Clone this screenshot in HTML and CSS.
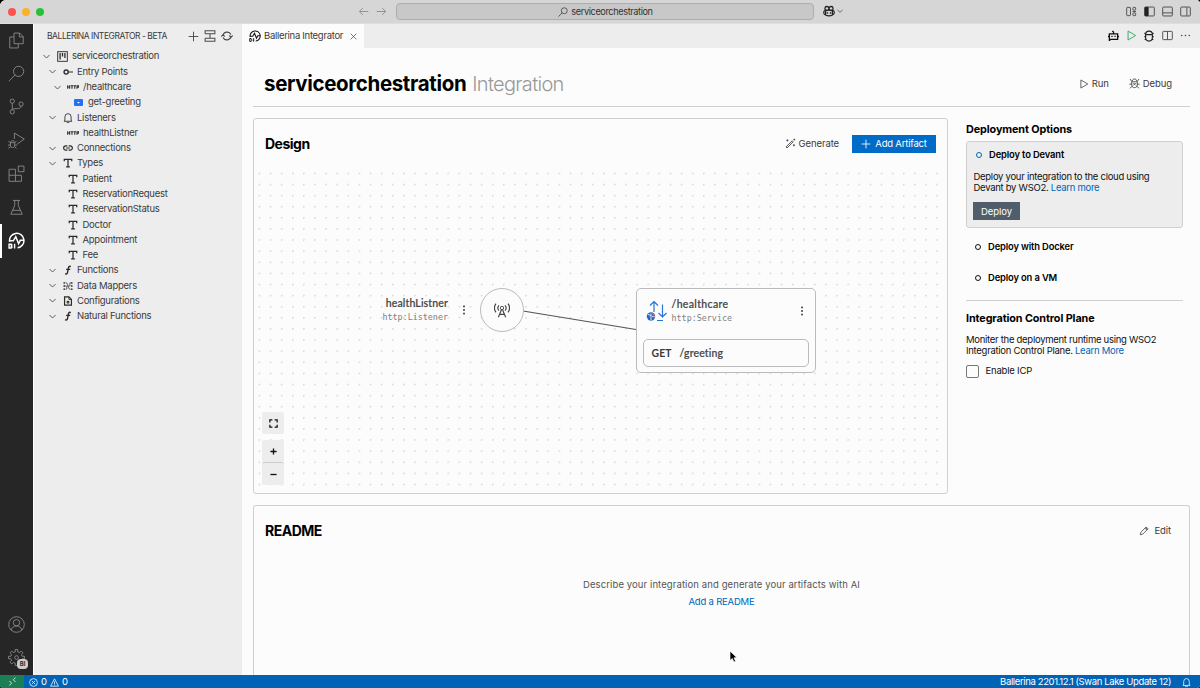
FILE: index.html
```
<!DOCTYPE html>
<html lang="en">
<head>
<meta charset="utf-8">
<title>serviceorchestration</title>
<link rel="stylesheet" href="styles.css">
</head>
<body>
<svg class="sprite" aria-hidden="true">
  <symbol id="chev" viewBox="0 0 16 16"><path d="M1 4.500l7 7 7-7"/></symbol>
  <symbol id="plus" viewBox="0 0 16 16"><path d="M8 1v14M1 8h14"/></symbol>
  <symbol id="left" viewBox="0 0 16 16"><path d="M15 8H2M7 3L2 8l5 5"/></symbol>
  <symbol id="right" viewBox="0 0 16 16"><path d="M1 8h13M9 3l5 5-5 5"/></symbol>
  <symbol id="search" viewBox="0 0 16 16"><circle cx="10" cy="6" r="4.800"/><path d="M6.500 9.500L.8 15.300"/></symbol>
  <symbol id="copilot" viewBox="0 0 16 16"><path d="M3 7C2 4 3 2 5 2s3 1 3 2.500C8 3 9 2 11 2s3 2 2 5M3 7h4l1-2.500L9 7h4M3 7c-1.500.5-2 1.500-2 3 0 3 4 4.500 7 4.500s7-1.500 7-4.500c0-1.500-.5-2.500-2-3M6 9.500v2M10 9.500v2M3.500 7.500v5M12.500 7.500v5" stroke-width="1.700"/></symbol>
  <symbol id="layout" viewBox="0 0 16 16"><rect x="1" y="2" width="5.500" height="12" rx="1"/><rect x="10" y="2" width="4" height="4" rx="1"/><rect x="10" y="10" width="4" height="4" rx="1"/><path d="M9.500 8h5"/></symbol>
  <symbol id="paneleft" viewBox="0 0 16 16"><rect x="1" y="1.500" width="14" height="13" rx="1.200"/><path d="M1.500 2h4.500v12H1.500z" fill="#222" stroke="#222"/></symbol>
  <symbol id="panebottom" viewBox="0 0 16 16"><rect x="1" y="1.500" width="14" height="13" rx="1.200"/><path d="M1 10h14"/></symbol>
  <symbol id="paneright" viewBox="0 0 16 16"><rect x="1" y="1.500" width="14" height="13" rx="1.200"/><path d="M10 2v12"/></symbol>
  <symbol id="split" viewBox="0 0 16 16"><rect x="1" y="2" width="14" height="12" rx="1"/><path d="M8 2v12"/></symbol>
  <symbol id="bot" viewBox="0 0 16 16"><path d="M2 15.300V5.500h12v8H4zM8 5.500V2M6 2h2M.8 8.500v2M15.200 8.500v2M5.800 8.500V10M10.200 8.500V10" stroke-width="1.900"/></symbol>
  <symbol id="play" viewBox="0 0 16 16"><path d="M3 1.500v13L14 8z"/></symbol>
  <symbol id="bug" viewBox="0 0 16 16"><path d="M3.500 6.200h9v3.600c0 3.200-1.800 5-4.500 5s-4.500-1.800-4.500-5zM3.500 6C3.500 3 5 1.500 8 1.500S12.500 3 12.500 6M2 4l1.500 1.500M14 4l-1.500 1.500M1.500 9h2M14.500 9h-2M2.300 13l1.500-1M13.700 13l-1.500-1" stroke-width="1.500"/></symbol>
  <symbol id="debug" viewBox="0 0 16 16"><path d="M5 4.500C5 2.500 6 1.500 8 1.500s3 1 3 3M3.500 5.500h9M4 5.500v4.500c0 2.500 1.500 4 4 4s4-1.500 4-4V5.500M1.500 1.500L4 5M14.500 1.500L12 5M.5 9H4M15.500 9H12M1.500 15L4.500 12M14.500 15l-3-3M6.300 7.300l3.400 3.400M9.700 7.300l-3.400 3.400"/></symbol>
  <symbol id="dots" viewBox="0 0 16 16"><g fill="currentColor" stroke="none"><circle cx="2.500" cy="8" r="1.200"/><circle cx="8" cy="8" r="1.200"/><circle cx="13.500" cy="8" r="1.200"/></g></symbol>
  <symbol id="kebab" viewBox="0 0 16 16"><g fill="currentColor" stroke="none"><rect x="6.700" y="1" width="2.600" height="2.600"/><rect x="6.700" y="6.700" width="2.600" height="2.600"/><rect x="6.700" y="12.400" width="2.600" height="2.600"/></g></symbol>
  <symbol id="close" viewBox="0 0 16 16"><path d="M1.500 1.500l13 13M14.500 1.500l-13 13" stroke-width="1.700"/></symbol>
  <symbol id="files" viewBox="0 0 24 24"><path d="M8.500 1.500h8l5 5v10h-13zM16 1.500V7h5.500M8.500 7H2.500v15.500h12V17"/></symbol>
  <symbol id="branch" viewBox="0 0 24 24"><circle cx="6" cy="4.500" r="3"/><circle cx="6" cy="19.500" r="3"/><circle cx="18.500" cy="8.500" r="3"/><path d="M6 7.500v9M18.500 11.500c0 3-3 3.500-6 3.500-4 0-6.500.5-6.500 2"/></symbol>
  <symbol id="rundebug" viewBox="0 0 24 24"><path d="M9 10V1.500L23 10l-10 7M3.500 15h6v3.500c0 2-1.300 3.500-3 3.500s-3-1.500-3-3.500zM4 15c0-2 1-3 2.500-3S9 13 9 15M.5 13l3 2M12 13l-2.500 2M0 18.500h3.500M13 18.500H9.500M.5 23l3.300-2.300M12 23l-3-2.300"/></symbol>
  <symbol id="ext" viewBox="0 0 24 24"><path d="M1.500 6h9v8.500h8.500v8.500H1.500zM1.500 14.500h9V23M14.500 1.500h8v8h-8z" stroke-linejoin="round"/></symbol>
  <symbol id="flask" viewBox="0 0 24 24"><path d="M7 2h10M9.500 2v7L4 21.500h16L14.500 9V2M6.500 16h11"/></symbol>
  <symbol id="bi" viewBox="0 0 24 24"><path d="M2.300 14A10.200 10.200 0 1 1 13.500 22.200M3 12.500h4.500l3.500-6 4 10 2.500-5H22" stroke-width="2.100"/><path d="M1.500 17.200h3q2 1.200 0 2.600q2.400 1.300 0 2.900H1.500zM9.300 16.500v6.700" stroke-width="2"/></symbol>
  <symbol id="account" viewBox="0 0 24 24"><circle cx="12" cy="12" r="11"/><circle cx="12" cy="9.500" r="4.500"/><path d="M4.500 20c1-4 4-6 7.500-6s6.500 2 7.500 6"/></symbol>
  <symbol id="gear" viewBox="0 0 24 24"><path d="M10.200 4V.8h3.600V4l2.600 1.100 2.300-2.300 2.500 2.500L18.900 7.600 20 10.200h3.200v3.600H20l-1.100 2.600 2.300 2.300-2.500 2.500-2.300-2.300L13.800 20v3.200h-3.600V20l-2.600-1.100-2.300 2.300-2.500-2.500 2.300-2.300L4 13.800H.8v-3.600H4l1.100-2.600-2.300-2.300 2.500-2.500 2.300 2.300z"/><circle cx="12" cy="12" r="2.600"/></symbol>
  <symbol id="collapse" viewBox="0 0 16 16"><path d="M1.500 5V1h13v4h-13M1.500 11v4h13v-4h-13M8 5v6" stroke-width="1.400"/></symbol>
  <symbol id="refresh" viewBox="0 0 16 16"><path d="M2.500 8A5.700 5.700 0 0 1 13.300 6M13.500 8A5.700 5.700 0 0 1 2.700 10M.3 8.700L2.500 6.300 5 8.700M11 7.300l2.500 2.400 2.200-2.400" stroke-width="1.500"/></symbol>
  <symbol id="project" viewBox="0 0 16 16"><rect x="1" y="1" width="14" height="14"/><path d="M4.500 3v9.500M8 3v5M11.500 3v7" stroke-width="1.900"/></symbol>
  <symbol id="entry" viewBox="0 0 16 16"><circle cx="5" cy="8" r="3.300" stroke-width="2.200"/><path d="M8.500 8H16" stroke-width="1.900"/></symbol>
  <symbol id="http" viewBox="0 0 18 16"><path d="M1 5.500v5M4 5.500v5M1 8h3M5.500 6h4M7.500 6v4.500M10 6h3.500M11.700 6v4.500M15 10.500V6h2.500v2.500H15" stroke-width="1.600"/></symbol>
  <symbol id="bell" viewBox="0 0 16 16"><path d="M3 12V6.500a5 5.500 0 0 1 10 0V12l1.500 1.200h-13zM6 14a2 1.800 0 0 0 4 0"/></symbol>
  <symbol id="link" viewBox="0 0 16 16"><path d="M7 4.500H4.500a3.500 3.500 0 0 0 0 7H7M9 4.500h2.500a3.500 3.500 0 0 1 0 7H9M5 8h6" stroke-width="1.900"/></symbol>
  <symbol id="type" viewBox="0 0 16 16"><path d="M2 5V2h12v3M8 2v12.500M5 14.300h6" stroke-width="2"/></symbol>
  <symbol id="fn" viewBox="0 0 16 16"><path d="M12.500 2.500c-3-1.500-3.700 1-4.200 4L7.200 12c-.5 2.500-2 3-4 2M5 7h6.500" stroke-width="2.200"/></symbol>
  <symbol id="mapper" viewBox="0 0 16 16"><path d="M4 3h2l4 10h2M4 13h2V8h5V3h2M2 8h3" stroke-width="1.300"/><g fill="currentColor" stroke="none"><circle cx="2" cy="3" r="1.500"/><circle cx="2" cy="8" r="1.500"/><circle cx="2" cy="13" r="1.500"/><circle cx="14" cy="3" r="1.500"/><circle cx="14" cy="8" r="1.500"/><circle cx="14" cy="13" r="1.500"/></g></symbol>
  <symbol id="config" viewBox="0 0 16 16"><path d="M2.500 1.500h7l4 4v9h-11z" stroke-width="1.900"/><path d="M9.500 1.500v4h4" stroke-width="1.400"/><circle cx="8" cy="10" r="1.500" stroke-width="1.700"/></symbol>
  <symbol id="wand" viewBox="0 0 16 16"><path d="M1.500 13L10.500 4l1.500 1.500-9 9zM3.500 2v3M2 3.500h3M13 9v3M11.500 10.500h3M13.500 1v2.500M12.300 2.200h2.500"/></symbol>
  <symbol id="pencil" viewBox="0 0 16 16"><path d="M2 14l1-4 8.500-8.500 3 3L6 13zM9.500 3.500l3 3M10.500 2.500l3 3"/></symbol>
  <symbol id="fit" viewBox="0 0 16 16"><path d="M1.500 6V1.500H6M10 1.500h4.500V6M14.500 10v4.500H10M6 14.500H1.500V10" stroke-width="2.200"/></symbol>
  <symbol id="antenna" viewBox="0 0 24 24"><circle cx="12" cy="9" r="2.500"/><path d="M11.200 11.500L6.500 23M12.800 11.500L17.500 23M8.500 18.500h7M7.500 5a6 6 0 0 0 0 8M16.500 5a6 6 0 0 1 0 8M3 2.500a11 11 0 0 0 0 13M21 2.500a11 11 0 0 1 0 13" stroke-width="1.700"/></symbol>
  <symbol id="remote" viewBox="0 0 16 16"><path d="M2.500 7l4 4-4 4M13.500 1l-4 4 4 4"/></symbol>
  <symbol id="error" viewBox="0 0 16 16"><circle cx="8" cy="8" r="6.900"/><path d="M5 5l6 6M11 5l-6 6"/></symbol>
  <symbol id="warn" viewBox="0 0 16 16"><path d="M8 1.500L1 14.500h14zM8 6v4.500M8 11.500V13"/></symbol>
</svg>

<div class="window">
  <header class="titlebar">
    <div class="lights"><i class="red"></i><i class="amber"></i><i class="green"></i></div>
    <div class="nav"><svg class="ic s11"><use href="#left"/></svg><svg class="ic s11"><use href="#right"/></svg></div>
    <div class="command"><svg class="ic s10"><use href="#search"/></svg><span>serviceorchestration</span></div>
    <div class="copilot"><svg class="ic s12"><use href="#copilot"/></svg><svg class="ic s6"><use href="#chev"/></svg></div>
    <div class="actions"><svg class="ic s11"><use href="#layout"/></svg><svg class="ic s11"><use href="#paneleft"/></svg><svg class="ic s11"><use href="#panebottom"/></svg><svg class="ic s11"><use href="#paneright"/></svg></div>
  </header>

  <div class="body">
    <nav class="activity">
      <div class="act"><svg class="ic s17"><use href="#files"/></svg></div>
      <div class="act"><svg class="ic s17 thin"><use href="#search"/></svg></div>
      <div class="act"><svg class="ic s17"><use href="#branch"/></svg></div>
      <div class="act"><svg class="ic s17"><use href="#rundebug"/></svg></div>
      <div class="act"><svg class="ic s17"><use href="#ext"/></svg></div>
      <div class="act"><svg class="ic s17"><use href="#flask"/></svg></div>
      <div class="act current"><svg class="ic s17"><use href="#bi"/></svg></div>
      <div class="act last"><svg class="ic s17"><use href="#account"/></svg></div>
      <div class="act"><svg class="ic s17"><use href="#gear"/></svg><b class="badge">BI</b></div>
    </nav>

    <aside class="sidebar">
      <div class="side-head"><span>BALLERINA INTEGRATOR - BETA</span><svg class="ic s11"><use href="#plus"/></svg><svg class="ic s12"><use href="#collapse"/></svg><svg class="ic s12"><use href="#refresh"/></svg></div>
      <div class="tree">
        <div class="row l0"><svg class="ic s7"><use href="#chev"/></svg><svg class="ic s11 dark"><use href="#project"/></svg><span>serviceorchestration</span></div>
        <div class="row l1"><svg class="ic s7"><use href="#chev"/></svg><svg class="ic s10 dark"><use href="#entry"/></svg><span>Entry Points</span></div>
        <div class="row l2"><svg class="ic s7"><use href="#chev"/></svg><svg class="ic s12 dark"><use href="#http"/></svg><span>/healthcare</span></div>
        <div class="row l3"><svg class="resource" viewBox="0 0 9 7"><rect width="9" height="7" rx="1" fill="#2470f5"/><path d="M3 3h3L4.500 4.500z" fill="#fff"/></svg><span>get-greeting</span></div>
        <div class="row l1"><svg class="ic s7"><use href="#chev"/></svg><svg class="ic s10 dark"><use href="#bell"/></svg><span>Listeners</span></div>
        <div class="row l2 leaf"><svg class="ic s12 dark"><use href="#http"/></svg><span>healthListner</span></div>
        <div class="row l1"><svg class="ic s7"><use href="#chev"/></svg><svg class="ic s10 dark"><use href="#link"/></svg><span>Connections</span></div>
        <div class="row l1"><svg class="ic s7"><use href="#chev"/></svg><svg class="ic s10 dark"><use href="#type"/></svg><span>Types</span></div>
        <div class="row l2 leaf"><svg class="ic s10 dark"><use href="#type"/></svg><span>Patient</span></div>
        <div class="row l2 leaf"><svg class="ic s10 dark"><use href="#type"/></svg><span>ReservationRequest</span></div>
        <div class="row l2 leaf"><svg class="ic s10 dark"><use href="#type"/></svg><span>ReservationStatus</span></div>
        <div class="row l2 leaf"><svg class="ic s10 dark"><use href="#type"/></svg><span>Doctor</span></div>
        <div class="row l2 leaf"><svg class="ic s10 dark"><use href="#type"/></svg><span>Appointment</span></div>
        <div class="row l2 leaf"><svg class="ic s10 dark"><use href="#type"/></svg><span>Fee</span></div>
        <div class="row l1"><svg class="ic s7"><use href="#chev"/></svg><svg class="ic s10 dark"><use href="#fn"/></svg><span>Functions</span></div>
        <div class="row l1"><svg class="ic s7"><use href="#chev"/></svg><svg class="ic s10"><use href="#mapper"/></svg><span>Data Mappers</span></div>
        <div class="row l1"><svg class="ic s7"><use href="#chev"/></svg><svg class="ic s10 dark"><use href="#config"/></svg><span>Configurations</span></div>
        <div class="row l1"><svg class="ic s7"><use href="#chev"/></svg><svg class="ic s10 dark"><use href="#fn"/></svg><span>Natural Functions</span></div>
      </div>
    </aside>

    <main class="editor">
      <div class="tabs">
        <div class="tab"><svg class="ic s12 black"><use href="#bi"/></svg><span>Ballerina Integrator</span><svg class="ic s7 shut"><use href="#close"/></svg></div>
        <div class="actions"><svg class="ic s11 black"><use href="#bot"/></svg><svg class="ic s11 run"><use href="#play"/></svg><svg class="ic s12 bug"><use href="#bug"/></svg><svg class="ic s11"><use href="#split"/></svg><svg class="ic s11"><use href="#dots"/></svg></div>
      </div>

      <div class="page">
        <div class="page-head">
          <h1>serviceorchestration</h1><span class="kind">Integration</span>
          <div class="head-btns">
            <span class="btn"><svg class="ic s10"><use href="#play"/></svg><span>Run</span></span>
            <span class="btn"><svg class="ic s11"><use href="#debug"/></svg><span>Debug</span></span>
          </div>
        </div>

        <div class="columns">
          <section class="card design">
            <div class="card-head">
              <h2>Design</h2>
              <span class="btn generate"><svg class="ic s11"><use href="#wand"/></svg><span>Generate</span></span>
              <span class="primary"><svg class="ic s10"><use href="#plus"/></svg><span>Add Artifact</span></span>
            </div>
            <div class="canvas">
              <svg class="wire" viewBox="0 0 693 325"><path d="M269 143L382 161.500"/></svg>
              <div class="listener">
                <div class="names"><span class="name">healthListner</span><span class="mono">http:Listener</span></div>
                <svg class="ic s10 dark"><use href="#kebab"/></svg>
                <div class="circle"><svg class="ic s16"><use href="#antenna"/></svg></div>
              </div>
              <div class="service">
                <div class="service-head">
                  <svg class="svc-icon" viewBox="0 0 22 22"><path d="M8 12V1.500M4 5.500l4-4 4 4M16.500 4.500V17M12.500 13l4 4 4-4M11 20.500h6" fill="none" stroke="#2673d9" stroke-width="1.200"/><circle cx="5" cy="16.500" r="4.200" fill="#2b67c7"/><path d="M2 14.500l3 1M5 13.500v7M6 16.500h3" stroke="#fff" stroke-width=".8"/><path d="M5.500 14h2.500v4" stroke="#d86a58" fill="none"/></svg>
                  <div class="names"><span class="name wide">/healthcare</span><span class="mono">http:Service</span></div>
                  <svg class="ic s10 dark"><use href="#kebab"/></svg>
                </div>
                <div class="resource-row"><b>GET</b><span class="name">/greeting</span></div>
              </div>
              <div class="controls">
                <div class="ctl"><svg class="ic s9 black"><use href="#fit"/></svg></div>
                <div class="zoom"><div class="ctl"><svg class="ic s7 bold"><use href="#plus"/></svg></div><div class="ctl"><svg class="ic s7 bold" viewBox="0 0 16 16"><path d="M1 8h14"/></svg></div></div>
              </div>
            </div>
          </section>

          <aside class="deploy">
            <h3>Deployment Options</h3>
            <div class="option-card">
              <div class="option"><i class="radio on"></i><b>Deploy to Devant</b></div>
              <p>Deploy your integration to the cloud using<br>Devant by WSO2. <a>Learn more</a></p>
              <span class="deploy-btn">Deploy</span>
            </div>
            <div class="option plain"><i class="radio"></i><b>Deploy with Docker</b></div>
            <div class="option plain"><i class="radio"></i><b>Deploy on a VM</b></div>
            <div class="icp">
              <h3>Integration Control Plane</h3>
              <p>Moniter the deployment runtime using WSO2<br>Integration Control Plane. <a>Learn More</a></p>
              <div class="check"><i></i><span>Enable ICP</span></div>
            </div>
          </aside>
        </div>

        <section class="card readme">
          <div class="card-head"><h2>README</h2><span class="btn edit"><svg class="ic s10"><use href="#pencil"/></svg><span>Edit</span></span></div>
          <div class="empty"><span>Describe your integration and generate your artifacts with AI</span><a>Add a README</a></div>
        </section>
      </div>
    </main>
  </div>

  <footer class="status">
    <div class="remote"><svg class="ic s9"><use href="#remote"/></svg></div>
    <div class="problems"><svg class="ic s9"><use href="#error"/></svg><span>0</span><svg class="ic s9"><use href="#warn"/></svg><span>0</span></div>
    <span class="version">Ballerina 2201.12.1 (Swan Lake Update 12)</span>
    <svg class="ic s9"><use href="#bell"/></svg>
  </footer>
  <svg class="cursor" viewBox="0 0 10 14"><path d="M1 1v9.500l2.300-2 1.600 3.600 1.700-.8L5 7.800h3z" fill="#000" stroke="#fff" stroke-width=".7"/></svg>
</div>
</body>
</html>
```
FILE: styles.css
```
* { box-sizing: border-box; }
body { margin: 0; background: #000; font: 9.5px/12px Inter, "Liberation Sans", sans-serif; letter-spacing: -.1px; color: #3b3b3b; overflow: hidden; }
h1, h2, h3, p { margin: 0; }
a { color: #0066b8; }
.sprite { position: absolute; width: 0; height: 0; }
.window { width: 1200px; height: 688px; display: flex; flex-direction: column; border-radius: 6px 4px 3px 3px; overflow: hidden; background: #fcfcfc; }

.ic { flex: none; display: block; fill: none; stroke: currentColor; stroke-width: 1.35; color: #4a4a4a; }
.s6 { width: 6px; height: 6px; }
.s7 { width: 7px; height: 7px; } .s8 { width: 8px; height: 8px; } .s9 { width: 9px; height: 9px; }
.s10 { width: 10px; height: 10px; } .s11 { width: 11px; height: 11px; } .s12 { width: 12px; height: 12px; }
.s16 { width: 16px; height: 16px; } .s17 { width: 17px; height: 17px; }
.dark { color: #2b2b2b; } .black { color: #111; } .run { color: #33a661; }
.bold { stroke-width: 3; color: #111; }

.titlebar { flex: none; height: 24px; display: flex; align-items: flex-start; background: #d6d6d6; border-bottom: 1px solid #dedede; }
.lights { width: 358px; height: 23px; padding-left: 8px; display: flex; align-items: center; gap: 6px; }
.lights i { width: 8px; height: 8px; border-radius: 50%; }
.red { background: #fc544d; } .amber { background: #fdb127; } .green { background: #27c138; }
.nav { display: flex; gap: 7px; width: 38px; padding-top: 6px; }
.nav .ic { color: #8e8e8e; }
.command { width: 418px; height: 17px; margin-top: 3px; border: 1px solid #adadad; border-radius: 4px; background: #c8c8c8; display: flex; align-items: center; justify-content: center; gap: 3px; font-size: 9.2px; letter-spacing: -.4px; color: #333; padding-left: 1px; }
.command span { letter-spacing: -.4px; }
.copilot { display: flex; align-items: center; gap: 2px; padding: 5px 0 0 9px; }
.copilot .s12 { color: #222; }
.copilot .s6 { stroke-width: 2; }
.actions { margin-left: auto; padding-right: 9px; display: flex; align-items: center; gap: 7px; height: 23px; }
.actions .bug { margin: 0 0 0 -1px; color: #222; }

.body { flex: 1; min-height: 0; display: flex; }
.activity { width: 34px; flex: none; background: #262626; border-right: 1px solid #fff; display: flex; flex-direction: column; }
.act { height: 33.4px; flex: none; display: flex; align-items: center; justify-content: center; position: relative; padding-bottom: 1px; }
.act .ic { color: #858585; }
.act .thin { stroke-width: .9; }
.act.current { border-left: 2px solid #fff; padding-right: 2px; }
.act.current .ic { color: #fff; }
.act.last { margin-top: auto; }
.badge { position: absolute; left: 17px; top: 17px; width: 11px; height: 10px; border-radius: 4px; background: #ccc; color: #333; font-size: 6px; line-height: 10px; text-align: center; }

.sidebar { width: 208px; flex: none; background: #ededed; }
.side-head { height: 24px; padding: 0 9px 0 13px; display: flex; align-items: center; gap: 5px; font-size: 8.5px; }
.side-head span { flex: 1; white-space: nowrap; letter-spacing: -.45px; }
.tree { padding-top: .8px; }
.row { height: 15.29px; display: flex; align-items: center; white-space: nowrap; letter-spacing: -.26px; }
.row .s7 { stroke-width: 2; }
.row .ic + .ic { margin-left: 7px; }
.row span { margin-left: 4px; }
.l0 { padding-left: 9px; } .l1 { padding-left: 14.500px; } .l2 { padding-left: 20px; } .l3 { padding-left: 40px; }
.l1 span { margin-left: 5px; }
.l1 .ic + .ic + span { margin-left: 4.500px; }
.l2 .ic + .ic { margin-left: 6px; }
.leaf { padding-left: 33px; }
.leaf .s10 { margin-left: 1px; }
.leaf .s10 + span { margin-left: 4.500px; }
.resource { width: 9px; height: 7px; }
.row .resource + span { margin-left: 5px; }

.editor { flex: 1; min-width: 0; display: flex; flex-direction: column; }
.tabs { height: 24px; flex: none; display: flex; background: #ededed; }
.tab { width: 122px; background: #fcfcfc; padding-left: 7px; display: flex; align-items: center; gap: 3px; white-space: nowrap; letter-spacing: -.3px; }
.tab .shut { margin-left: 4px; }
.page { flex: 1; min-height: 0; padding: 0 10px 0 11px; display: flex; flex-direction: column; }
.page-head { height: 59px; flex: none; border-bottom: 1px solid #d0d0d0; padding: 13px 18px 0 11px; display: flex; align-items: center; }
h1 { font-size: 20.5px; line-height: 26px; letter-spacing: -.35px; color: #000; }
.kind { font-size: 20px; line-height: 26px; font-weight: 300; color: #999; margin-left: 6px; letter-spacing: -.68px; }
.head-btns { margin-left: auto; display: flex; gap: 20px; }
.btn { display: flex; align-items: center; gap: 3px; }

.columns { display: flex; margin-top: 11px; height: 376px; flex: none; }
.card { border: 1px solid #d0d0d0; border-radius: 3px; }
.card-head { display: flex; align-items: center; padding: 0 11px; height: 49px; flex: none; }
h2 { font-size: 14px; line-height: 18px; color: #000; letter-spacing: -.5px; }
.design { width: 695px; flex: none; display: flex; flex-direction: column; }
.generate { margin-left: auto; margin-right: 13px; }
.primary { width: 84px; height: 18px; background: #006cc7; color: #fff; display: flex; align-items: center; justify-content: center; gap: 4px; white-space: nowrap; letter-spacing: -.2px; }
.primary .ic { color: #fff; }
.canvas { position: relative; flex: 1; background: radial-gradient(circle at 5.300px 5.300px, #d9d9d9 .7px, transparent 1.1px) 0 0 / 11.115px 11.115px; }
.wire { position: absolute; left: 0; top: 0; width: 693px; height: 325px; fill: none; stroke: #555; stroke-width: 1.2; }
.names { display: flex; flex-direction: column; }
.name { font: 500 10.5px/14px Lato, sans-serif; letter-spacing: .15px; color: #444; -webkit-text-stroke: .2px #444; }
.wide { letter-spacing: .35px; }
.mono { font: 8.4px/14px "DejaVu Sans Mono", monospace; letter-spacing: 0; color: #808080; }
.listener { position: absolute; left: 128px; top: 120px; display: flex; align-items: center; }
.listener .names { width: 66px; align-items: flex-end; }
.listener > .ic { margin: 0 11px; }
.circle { width: 44px; height: 44px; border: 1px solid #bbb; border-radius: 50%; background: #fcfcfc; display: flex; align-items: center; justify-content: center; }
.circle .ic { color: #444; margin-bottom: 1px; }
.service { position: absolute; left: 381.500px; top: 120px; width: 180px; height: 85px; border: 1.4px solid #bbb; border-radius: 5px; background: #fcfcfc; padding: 8px 6px 0; }
.service-head { height: 28px; display: flex; align-items: center; padding: 0 2px 0 3px; }
.svc-icon { width: 22px; height: 22px; flex: none; }
.service-head .names { flex: 1; margin-left: 4px; }
.resource-row { margin-top: 14px; height: 28px; border: 1px solid #bbb; border-radius: 5px; display: flex; align-items: center; padding-left: 8px; gap: 8px; }
.resource-row b { font: 700 10.4px/14px Lato, sans-serif; letter-spacing: .1px; }
.controls { position: absolute; left: 8px; top: 244px; display: flex; flex-direction: column; gap: 6px; }
.ctl { width: 22px; height: 22px; background: #ededed; border-radius: 2px; display: flex; align-items: center; justify-content: center; }
.zoom .ctl + .ctl { border-top: 1px solid #ccc; height: 23px; }

.deploy { width: 217px; margin-left: 18px; color: #111; }
h3 { font-size: 10.8px; line-height: 14px; color: #000; letter-spacing: -.1px; padding-top: 5px; }
.option-card { margin-top: 4px; height: 87px; background: #ededed; border: 1px solid #d0d0d0; border-radius: 3px; padding: 7px 6px; }
.option { display: flex; align-items: center; gap: 7px; height: 12px; padding-left: 3px; color: #000; font-size: 9.4px; letter-spacing: -.14px; }
.option b { font-weight: 600; }
.radio { width: 6px; height: 6px; border: 1.2px solid #111; border-radius: 50%; }
.radio.on { border-color: #0066b8; }
.deploy p { line-height: 11px; white-space: nowrap; letter-spacing: -.28px; }
.option-card p { margin-top: 10px; padding-left: .5px; }
.deploy-btn { display: block; width: 47px; height: 18px; margin-top: 9px; background: #505d6b; color: #fff; line-height: 19px; text-align: center; }
.plain { margin-left: 6px; margin-top: 13px; }
.plain + .plain { margin-top: 19px; }
.icp { margin-top: 16px; border-top: 1px solid #d0d0d0; }
.icp h3 { padding-top: 11px; }
.icp p { margin-top: 8px; }
.check { display: flex; gap: 7px; margin-top: 9px; letter-spacing: -.2px; }
.check i { width: 12.500px; height: 12.500px; border: 1px solid #777; border-radius: 2px; }

.readme { flex: 1; margin-top: 11px; border-bottom: 0; border-radius: 3px 3px 0 0; }
.readme .card-head { height: 50px; padding-right: 18px; }
.edit { margin-left: auto; gap: 5px; }
.empty { display: flex; flex-direction: column; align-items: center; gap: 5px; margin-top: 23px; color: #555; }
.empty span { letter-spacing: .1px; }
.empty a { letter-spacing: -.2px; }

.status { height: 13px; flex: none; display: flex; align-items: center; background: #0063b5; color: #fff; line-height: 14px; padding: 1px 9px 0 0; }
.status .ic { color: #fff; }
.remote { width: 24px; height: 13px; margin-top: -1px; background: #1a7f55; display: flex; align-items: center; justify-content: center; }
.problems { display: flex; align-items: center; gap: 3px; padding-left: 5px; }
.version { margin-left: auto; margin-right: 11px; letter-spacing: -.37px; }
.cursor { position: absolute; left: 729px; top: 650px; width: 10px; height: 14px; }
```
